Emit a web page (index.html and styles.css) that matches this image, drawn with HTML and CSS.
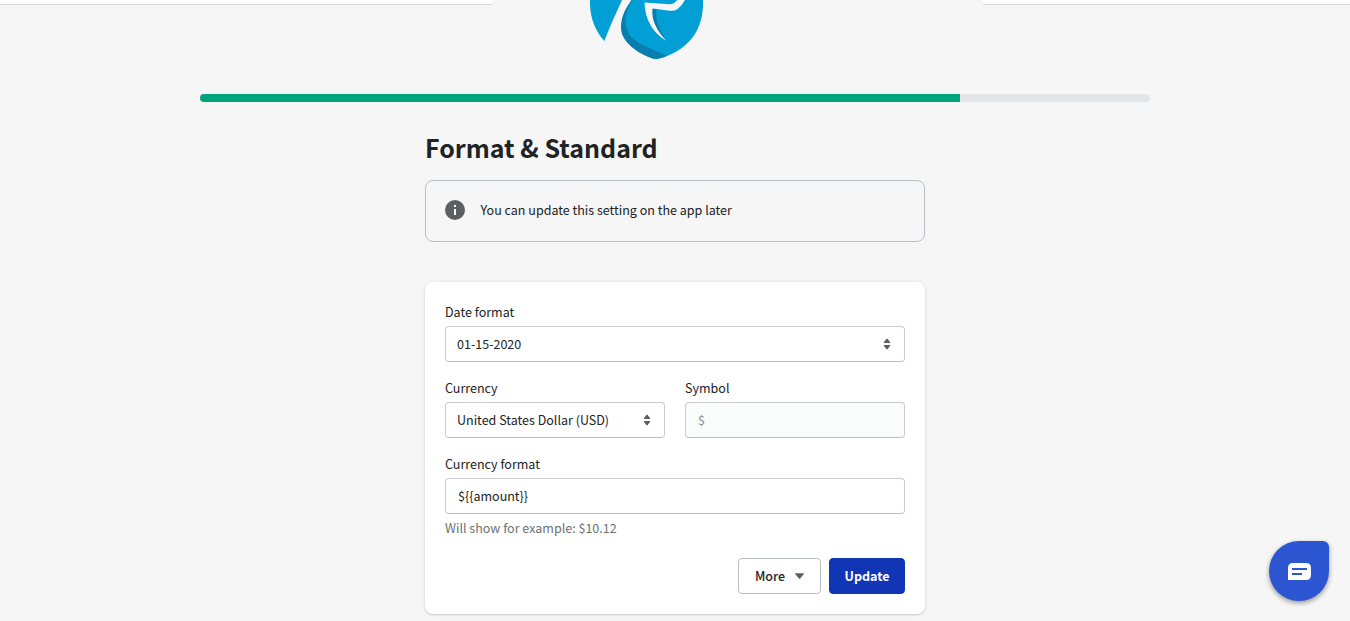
FILE: index.html
```html
<!DOCTYPE html>
<html lang="en">
<head>
<meta charset="utf-8">
<title>Format &amp; Standard</title>
<link rel="stylesheet" href="styles.css">
</head>
<body>
<header class="top">
  <div class="top-side"></div>
  <div class="top-center">
    <svg class="logo" width="114" height="60" viewBox="0 0 114 60">
      <path fill="#019fd5" d="M0 0H32C29 7 20 26 14.500 41C5 31 -.5 17 0 0Z"/>
      <path fill="#019fd5" d="M42 0H113C114 25 103 46 77 56C71 58 68 59 66 59C51 55 31 43 31.500 29C31 18 35 9 42 0Z"/>
      <path fill="#087dae" d="M41.500 0C34 11 31 18 31 28C32 42 48 54 64 59Q71 59 77 56C60 48 43 43 38 32C33 20 36 8 43 0Z"/>
      <path fill="#087dae" d="M62 8H67C64 18 69 30 76.500 41C66 31 60 20 62 8Z"/>
      <path fill="#f5f5f5" d="M54.500 2.500L79 4.300Q84 4.500 87 0H95Q92 6 87 9.500Q84 11.500 78 10.500L62.500 8.500C61 20 67 31 76.500 41C63 33 55 20 54.500 2.500Z"/>
    </svg>
  </div>
  <div class="top-side"></div>
</header>
<div class="progress"><div class="progress-fill" style="width:80%"></div></div>
<main class="page">
  <h1 class="title">Format &amp; Standard</h1>
  <div class="banner">
    <svg width="20" height="20" viewBox="0 0 20 20"><circle cx="10" cy="10" r="10" fill="#5c5f62"/><path fill="#fff" d="M9 5h2v2H9zM9 9h2v6H9z"/></svg>
    <span>You can update this setting on the app later</span>
  </div>
  <section class="card">
    <div class="field">
      <div class="label">Date format</div>
      <div class="control"><span>01-15-2020</span><svg width="8" height="12" viewBox="0 0 8 12"><path fill="#5c5f62" d="M1 5Q.3 5 1 4L3.300 1Q4 .3 4.700 1L7 4Q7.700 5 7 5ZM1 7H7Q7.700 7 7 8L4.700 11Q4 11.700 3.300 11L1 8Q.3 7 1 7Z"/></svg></div>
    </div>
    <div class="row">
      <div class="field">
        <div class="label">Currency</div>
        <div class="control"><span>United States Dollar (USD)</span><svg width="8" height="12" viewBox="0 0 8 12"><path fill="#5c5f62" d="M1 5Q.3 5 1 4L3.300 1Q4 .3 4.700 1L7 4Q7.700 5 7 5ZM1 7H7Q7.700 7 7 8L4.700 11Q4 11.700 3.300 11L1 8Q.3 7 1 7Z"/></svg></div>
      </div>
      <div class="field">
        <div class="label">Symbol</div>
        <div class="control input disabled">$</div>
      </div>
    </div>
    <div class="field">
      <div class="label">Currency format</div>
      <div class="control input">${{amount}}</div>
      <div class="help">Will show for example: $10.12</div>
    </div>
    <div class="actions">
      <button class="btn">More<svg width="9" height="6" viewBox="0 0 8 5"><path fill="#5c5f62" d="M.5 0h7q.8 0 .3.800L4.600 4.700q-.6.500-1.200 0L.2.800Q-.3 0 .5 0Z"/></svg></button>
      <button class="btn primary">Update</button>
    </div>
  </section>
</main>
<div class="chat">
  <svg width="23" height="18" viewBox="0 0 23 18"><path fill="#fff" d="M5 0H18Q23 0 23 5V12Q23 17 18 17H0V5Q0 0 5 0Z"/><path stroke="#2c55d2" stroke-width="2" d="M4 6H19M4 11H14"/></svg>
</div>
</body>
</html>
```
FILE: styles.css
```css
* { box-sizing: border-box; }
body {
  margin: 0;
  height: 621px;
  overflow: hidden;
  background: #f6f6f6;
  color: #202223;
  font: 12.53px/20px "Noto Sans CJK SC", "Noto Sans CJK JP", sans-serif;
}
.top { display: flex; height: 94px; }
.top-side { height: 5px; background: #fff; border-bottom: 1px solid #d9dadb; }
.top-side:first-child { width: 492px; }
.top-side:last-child { flex: 1; }
.top-center { width: 491px; padding-left: 98px; }
.logo { display: block; }
.progress {
  width: 950px;
  height: 8px;
  margin: 0 auto;
  border-radius: 4px;
  overflow: hidden;
  background: #e4e5e7;
}
.progress-fill { height: 100%; background: #00a47c; }
.page { width: 500px; margin: 29px auto 0; }
.title { margin: 0; font-size: 25px; line-height: 32px; font-weight: 700; }
.banner {
  display: flex;
  align-items: center;
  gap: 15.5px;
  height: 62px;
  margin-top: 17px;
  padding: 0 19px 2px;
  border: 1px solid #babfc3;
  border-radius: 8px;
}
.card {
  display: flex;
  flex-direction: column;
  gap: 16px;
  height: 332px;
  margin-top: 40px;
  padding: 20px;
  background: #fff;
  border-radius: 8px;
  box-shadow: 0 0 5px rgba(23, 24, 24, .06), 0 1px 2px rgba(0, 0, 0, .15);
}
.row { display: grid; grid-template-columns: 1fr 1fr; gap: 20px; }
.label { margin-bottom: 4px; }
.control {
  display: flex;
  align-items: center;
  justify-content: space-between;
  height: 36px;
  padding: 0 13px 0 11px;
  border: 1px solid #c9cccf;
  border-bottom-color: #babfc3;
  border-radius: 4px;
  background: #fff;
}
.input { padding-left: 12px; }
.disabled { color: #8c9196; background: #fafbfb; }
.help { margin-top: 4px; color: #6d7175; }
.actions { display: flex; justify-content: flex-end; gap: 8px; margin-top: 4px; }
.btn {
  display: flex;
  align-items: center;
  justify-content: center;
  gap: 10px;
  width: 83px;
  height: 36px;
  padding: 0;
  border: 1px solid #babfc3;
  border-radius: 4px;
  background: #fff;
  color: #202223;
  font: inherit;
  font-weight: 500;
}
.primary { width: 76px; border-color: #1036b5; background: #1036b5; color: #fff; font-weight: 700; }
.chat {
  position: fixed;
  right: 21px;
  bottom: 20px;
  display: flex;
  align-items: center;
  justify-content: center;
  width: 60px;
  height: 60px;
  padding-top: 2px;
  border-radius: 30px 6px 30px 30px;
  background: #2c55d2;
  box-shadow: 0 2px 5px rgba(0, 0, 0, .4);
}
```
